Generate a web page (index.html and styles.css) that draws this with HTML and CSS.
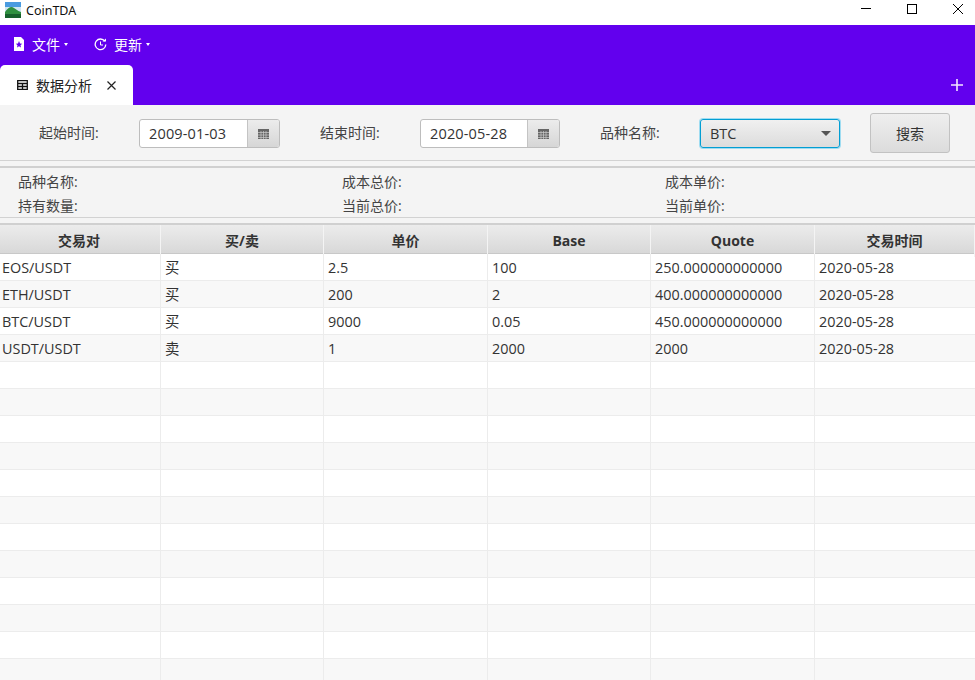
FILE: index.html
```html
<!DOCTYPE html>
<html lang="zh">
<head>
<meta charset="utf-8">
<title>CoinTDA</title>
<link rel="stylesheet" href="styles.css">
</head>
<body>
<div class="app">
  <header class="titlebar">
    <div class="brand">
      <svg class="logo" width="16" height="16" viewBox="0 0 16 16"><rect width="16" height="6" fill="#4a9be0"/><rect y="5" width="16" height="6" fill="#cfe6f2"/><path d="M0 10 Q5 3 9 6 T16 10 V16 H0Z" fill="#2f8f3f"/><rect y="12" width="16" height="4" fill="#17602c"/></svg>
      <span>CoinTDA</span>
    </div>
    <div class="winctl">
      <svg width="12" height="12" viewBox="0 0 12 12"><path d="M1 5.500H11" stroke="#000" fill="none"/></svg>
      <svg width="12" height="12" viewBox="0 0 12 12"><rect x="1.500" y="1.500" width="9" height="9" stroke="#000" fill="none"/></svg>
      <svg width="12" height="12" viewBox="0 0 12 12"><path d="M1 1L11 11M11 1L1 11" stroke="#000" fill="none"/></svg>
    </div>
  </header>
  <section class="purple">
    <nav class="menubar">
      <div class="menu">
        <svg width="12" height="14" viewBox="0 0 12 14"><path d="M1 0H8L11 3V14H1Z" fill="#fff"/><path d="M6 4L7 6.500L9.200 6.700L7.500 8.200L8 10.500L6 9.300L4 10.500L4.500 8.200L2.800 6.700L5 6.500Z" fill="#6200ee"/></svg>
        <span>文件</span><i class="caret"></i>
      </div>
      <div class="menu">
        <svg width="13" height="13" viewBox="0 0 13 13"><path d="M10.800 3.200A5.300 5.300 0 1 0 11.800 6.500" fill="none" stroke="#fff" stroke-width="1.300"/><path d="M8.500 3.500H12V0.500Z" fill="#fff"/><path d="M6.500 3.500V7H9" fill="none" stroke="#fff"/></svg>
        <span>更新</span><i class="caret"></i>
      </div>
    </nav>
    <div class="tabbar">
      <div class="tab">
        <svg width="11" height="10" viewBox="0 0 11 10"><path d="M.7 .7H10.300V9.300H.7ZM.7 3.500H10.300M.7 6.500H10.300M5.500 3.500V9.300" fill="none" stroke="#111" stroke-width="1.300"/></svg>
        <span>数据分析</span>
        <svg class="close" width="9" height="9" viewBox="0 0 9 9"><path d="M.5 .5L8.500 8.500M8.500 .5L.5 8.500" stroke="#222" stroke-width="1.200" fill="none"/></svg>
      </div>
      <svg class="plus" width="12" height="12" viewBox="0 0 12 12"><path d="M6 0V12M0 6H12" stroke="#f3e6ff" stroke-width="1.600" fill="none"/></svg>
    </div>
  </section>
  <form class="filters">
    <label class="lbl lbl-a">起始时间:</label>
    <div class="date date-first"><span class="date-val">2009-01-03</span><span class="date-btn"><svg width="11" height="10" viewBox="0 0 11 10"><path d="M0 0H11V10H0Z" fill="#666"/><path d="M0 3.500H11M0 6H11M0 8.500H11M3 2V10M5.500 2V10M8 2V10" stroke="#ccc" stroke-width=".7" fill="none"/></svg></span></div>
    <label class="lbl lbl-b">结束时间:</label>
    <div class="date"><span class="date-val">2020-05-28</span><span class="date-btn"><svg width="11" height="10" viewBox="0 0 11 10"><path d="M0 0H11V10H0Z" fill="#666"/><path d="M0 3.500H11M0 6H11M0 8.500H11M3 2V10M5.500 2V10M8 2V10" stroke="#ccc" stroke-width=".7" fill="none"/></svg></span></div>
    <label class="lbl lbl-c">品种名称:</label>
    <div class="combo"><span>BTC</span><i class="combo-arrow"></i></div>
    <button class="search" type="button">搜索</button>
  </form>
  <div class="sep"></div>
  <section class="info">
    <span>品种名称:</span><span>成本总价:</span><span>成本单价:</span>
    <span>持有数量:</span><span>当前总价:</span><span>当前单价:</span>
  </section>
  <div class="sep"></div>
  <div class="table">
    <div class="row head"><div>交易对</div><div>买/卖</div><div>单价</div><div>Base</div><div>Quote</div><div>交易时间</div></div>
    <div class="row"><div>EOS/USDT</div><div>买</div><div>2.5</div><div>100</div><div>250.000000000000</div><div>2020-05-28</div></div>
    <div class="row"><div>ETH/USDT</div><div>买</div><div>200</div><div>2</div><div>400.000000000000</div><div>2020-05-28</div></div>
    <div class="row"><div>BTC/USDT</div><div>买</div><div>9000</div><div>0.05</div><div>450.000000000000</div><div>2020-05-28</div></div>
    <div class="row"><div>USDT/USDT</div><div>卖</div><div>1</div><div>2000</div><div>2000</div><div>2020-05-28</div></div>
    <div class="row"><div></div><div></div><div></div><div></div><div></div><div></div></div>
    <div class="row"><div></div><div></div><div></div><div></div><div></div><div></div></div>
    <div class="row"><div></div><div></div><div></div><div></div><div></div><div></div></div>
    <div class="row"><div></div><div></div><div></div><div></div><div></div><div></div></div>
    <div class="row"><div></div><div></div><div></div><div></div><div></div><div></div></div>
    <div class="row"><div></div><div></div><div></div><div></div><div></div><div></div></div>
    <div class="row"><div></div><div></div><div></div><div></div><div></div><div></div></div>
    <div class="row"><div></div><div></div><div></div><div></div><div></div><div></div></div>
    <div class="row"><div></div><div></div><div></div><div></div><div></div><div></div></div>
    <div class="row"><div></div><div></div><div></div><div></div><div></div><div></div></div>
    <div class="row"><div></div><div></div><div></div><div></div><div></div><div></div></div>
    <div class="row"><div></div><div></div><div></div><div></div><div></div><div></div></div>
  </div>
</div>
</body>
</html>
```
FILE: styles.css
```css
* { box-sizing: border-box; }
html, body { margin: 0; height: 100%; overflow: hidden; }
body { font-family: "Open Sans", "Noto Sans CJK SC", sans-serif; font-size: 14px; color: #333; background: #f4f4f4; }
.app { width: 975px; height: 680px; overflow: hidden; display: flex; flex-direction: column; }

.titlebar { height: 25px; flex: none; background: #fff; display: flex; justify-content: space-between; align-items: center; padding-left: 5px; color: #111; }
.brand { display: flex; align-items: center; gap: 5px; font-size: 12.500px; font-family: "Noto Sans", sans-serif; margin-top: -5px; }
.winctl { display: flex; gap: 34px; padding-right: 11px; margin-top: -8px; }
.winctl svg { display: block; }

.purple { height: 80px; flex: none; background: #6200ee; display: flex; flex-direction: column; }
.menubar { height: 40px; display: flex; align-items: center; padding: 0 0 2px 13px; gap: 26px; color: #fff; font-size: 14px; }
.menu { display: flex; align-items: center; gap: 7px; }
.caret { border: 2.500px solid transparent; border-top: 3px solid #fff; border-bottom: 0; margin-left: -3px; }
.tabbar { height: 40px; display: flex; justify-content: space-between; align-items: center; padding-right: 12px; }
.tab { width: 133px; height: 40px; background: #fff; border-radius: 5px 5px 0 0; display: flex; align-items: center; padding-left: 17px; color: #222; font-size: 14px; }
.tab span { margin: 0 15px 0 8px; }
.close { display: block; }

.filters { height: 55px; flex: none; background: #f4f4f4; display: flex; align-items: flex-start; padding-top: 14px; font-size: 14.500px; }
.lbl { line-height: 28px; color: #444; font-size: 14px; width: 100px; }
.lbl-a { margin-left: 39px; }
.lbl-b { margin-left: 40px; }
.lbl-c { margin-left: 40px; }
.date { width: 140px; height: 29px; border: 1px solid #bdbdbd; border-radius: 3px; background: #fff; display: flex; }
.date-first { width: 141px; }
.date-val { flex: 1; padding-left: 9px; line-height: 27px; color: #333; letter-spacing: .15px; }
.date-btn { width: 32px; display: flex; align-items: center; justify-content: center; border-left: 1px solid #c4c4c4; background: linear-gradient(#ececec, #d6d6d6); border-radius: 0 2px 2px 0; }
.combo { width: 140px; height: 29px; border: 1px solid #039ed3; box-shadow: 0 0 0 1px #9fdcf1; border-radius: 3px; background: linear-gradient(#f0f0f0, #dcdcdc); display: flex; align-items: center; justify-content: space-between; padding: 0 8px 0 9px; color: #333; }
.combo-arrow { border: 5.500px solid transparent; border-top: 5px solid #555; border-bottom: 0; }
.search { width: 80px; height: 40px; margin: -6px 0 0 30px; border: 1px solid #c2c2c2; border-radius: 3px; background: linear-gradient(#efefef, #dcdcdc); font: inherit; font-size: 14px; color: #333; }

.sep { height: 8px; flex: none; border-top: 1px solid #d2d2d2; border-bottom: 2px solid #d0d0d0; background: #f4f4f4; }
.info { height: 49px; flex: none; display: grid; grid-template-columns: 324px 323px 1fr; padding: 1px 0 0 18px; font-size: 14px; color: #444; grid-auto-rows: 24px; align-items: center; }

.table { flex: 1; background: #fff; }
.row { display: grid; grid-template-columns: 161px 163px 164px 163px 164px 160px; height: 27px; border-bottom: 1px solid #ececec; }
.row:nth-child(odd) { background: #f8f8f8; }
.row:nth-child(even) { background: #fff; }
.row > div { border-right: 1px solid #ececec; padding: 0 4px; line-height: 28px; white-space: nowrap; color: #333; font-size: 14.400px; }
.row > div:first-child { padding-left: 2px; }
.row > div:last-child { border-right: 0; }
.row.head { height: 29px; background: linear-gradient(#ececec, #d8d8d8); border-bottom: 1px solid #c8c8c8; }
.row.head > div { border-right: 1px solid #f4f4f4; text-align: center; font-weight: 700; font-size: 14px; color: #333; line-height: 32px; }
```
